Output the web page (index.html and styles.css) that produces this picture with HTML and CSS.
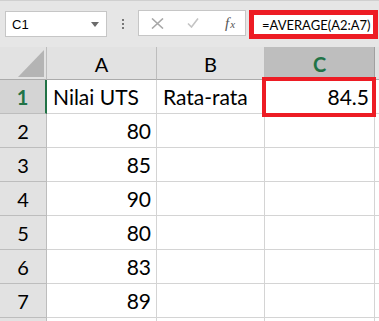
FILE: index.html
```html
<!DOCTYPE html>
<html>
<head>
<meta charset="utf-8">
<link rel="stylesheet" href="styles.css">
</head>
<body>
<div class="app">
  <div class="toolbar">
    <div class="namebox">
      <span class="name">C1</span>
      <svg class="caret" width="8" height="5" viewBox="0 0 8 5"><path d="M0 0H8L4 5Z" fill="#6b6b6b"/></svg>
    </div>
    <div class="dots"><i></i><i></i><i></i></div>
    <div class="buttons">
      <svg class="btn-x" width="13" height="11" viewBox="0 0 13 11"><path d="M1 0.5L12 10.5M12 0.5L1 10.5" stroke="#a8a8a8" stroke-width="1.6" fill="none"/></svg>
      <svg class="btn-check" width="12" height="10" viewBox="0 0 12 10"><path d="M1 5.5L4.5 9L11 0.5" stroke="#c4c4c4" stroke-width="1.6" fill="none"/></svg>
      <span class="fx"><span class="f">f</span><span class="x">x</span></span>
    </div>
    <div class="formula">=AVERAGE(A2:A7)</div>
  </div>
  <div class="sheet">
    <div class="corner"><svg width="26" height="27" viewBox="0 0 26 27"><path d="M0 27H26V0Z" fill="#b4b4b4"/></svg></div>
    <div class="colhead">A</div>
    <div class="colhead">B</div>
    <div class="colhead sel">C</div>
    <div class="colhead extra"></div>

    <div class="rowhead sel">1</div>
    <div class="cell">Nilai UTS</div>
    <div class="cell">Rata-rata</div>
    <div class="cell num">84.5</div>
    <div class="cell extra"></div>

    <div class="rowhead">2</div>
    <div class="cell num">80</div>
    <div class="cell"></div>
    <div class="cell"></div>
    <div class="cell extra"></div>

    <div class="rowhead">3</div>
    <div class="cell num">85</div>
    <div class="cell"></div>
    <div class="cell"></div>
    <div class="cell extra"></div>

    <div class="rowhead">4</div>
    <div class="cell num">90</div>
    <div class="cell"></div>
    <div class="cell"></div>
    <div class="cell extra"></div>

    <div class="rowhead">5</div>
    <div class="cell num">80</div>
    <div class="cell"></div>
    <div class="cell"></div>
    <div class="cell extra"></div>

    <div class="rowhead">6</div>
    <div class="cell num">83</div>
    <div class="cell"></div>
    <div class="cell"></div>
    <div class="cell extra"></div>

    <div class="rowhead">7</div>
    <div class="cell num">89</div>
    <div class="cell"></div>
    <div class="cell"></div>
    <div class="cell extra"></div>

    <div class="rowhead"></div>
    <div class="cell"></div>
    <div class="cell"></div>
    <div class="cell"></div>
    <div class="cell extra"></div>

    <div class="highlight"></div>
  </div>
</div>
</body>
</html>
```

FILE: styles.css
```css
html, body {
  margin: 0;
  padding: 0;
  background: #ffffff;
  overflow: hidden;
}
.app {
  width: 379px;
  height: 321px;
  overflow: hidden;
  font-family: Lato, "Open Sans", sans-serif;
}
.toolbar {
  height: 46px;
  background: #e6e6e6;
  border-top: 1px solid #d0d0d0;
  display: flex;
  align-items: flex-start;
  box-sizing: border-box;
  padding-top: 9px;
}
.namebox {
  margin-left: 5px;
  margin-top: 1px;
  width: 102px;
  height: 26px;
  box-sizing: border-box;
  background: #fff;
  border: 1px solid #c6c6c6;
  display: flex;
  align-items: center;
  justify-content: space-between;
  padding: 0 7px 0 6px;
}
.name {
  font-family: "Liberation Sans", Arial, sans-serif;
  font-size: 13px;
  color: #000;
}
.caret { margin-top: 1px; }
.dots {
  width: 31px;
  display: flex;
  flex-direction: column;
  align-items: center;
  gap: 2px;
  margin-top: 9px;
}
.dots i {
  display: block;
  width: 2px;
  height: 2px;
  background: #777;
}
.buttons {
  width: 108px;
  height: 26px;
  box-sizing: border-box;
  background: #fff;
  border: 1px solid #c6c6c6;
  display: flex;
  align-items: center;
  padding-left: 12px;
}
.btn-x { margin-right: 23px; }
.btn-check { margin-right: 26px; }
.fx {
  font-family: "Liberation Serif", "DejaVu Serif", serif;
  font-style: italic;
  color: #555;
  display: flex;
  align-items: baseline;
}
.fx .f { font-size: 15px; }
.fx .x { font-size: 11px; margin-left: 1px; }
.formula {
  margin-left: 3px;
  margin-right: 1px;
  flex: 1;
  height: 29px;
  box-sizing: border-box;
  border: 5px solid #ed1c24;
  background: #fff;
  font-family: Lato, sans-serif;
  font-size: 13px;
  color: #000;
  display: flex;
  align-items: center;
  padding-left: 8px;
  white-space: nowrap;
  overflow: hidden;
}
.sheet {
  position: relative;
  background: #e6e6e6;
  display: grid;
  grid-template-columns: 47px 110px 108px 110px 1fr;
  grid-template-rows: 33px repeat(8, 34px);
  padding-top: 1px;
}
.corner {
  background: #e2e2e2;
  border-right: 1px solid #bdbdbd;
  border-bottom: 1px solid #ababab;
  display: flex;
  align-items: flex-end;
  justify-content: flex-end;
  padding: 0 2px 2px 0;
}
.colhead {
  background: #e2e2e2;
  border-right: 1px solid #bdbdbd;
  border-bottom: 1px solid #ababab;
  display: flex;
  align-items: center;
  justify-content: center;
  font-size: 20px;
  color: #000;
  padding-top: 2px;
}
.colhead.sel {
  background: #bebebe;
  color: #217346;
  font-weight: bold;
  border-right-color: #a0a0a0;
}
.colhead.extra { border-right: 0; }
.rowhead {
  background: #e2e2e2;
  border-right: 1px solid #bdbdbd;
  border-bottom: 1px solid #bdbdbd;
  display: flex;
  align-items: center;
  justify-content: center;
  font-size: 20px;
  color: #000;
}
.rowhead.sel {
  background: #d4d4d4;
  color: #217346;
  font-weight: bold;
  border-right: 2px solid #217346;
}
.cell {
  background: #fff;
  border-right: 1px solid #d4d4d4;
  border-bottom: 1px solid #d4d4d4;
  display: flex;
  align-items: center;
  padding: 0 6px;
  font-size: 21px;
  color: #000;
  white-space: nowrap;
  overflow: hidden;
}
.cell.num { justify-content: flex-end; padding-right: 5px; }
.cell.extra { border-right: 0; padding: 0; }
.highlight {
  position: absolute;
  left: 262px;
  top: 31px;
  width: 114px;
  height: 40px;
  box-sizing: border-box;
  border: 4px solid #ed1c24;
}
```
